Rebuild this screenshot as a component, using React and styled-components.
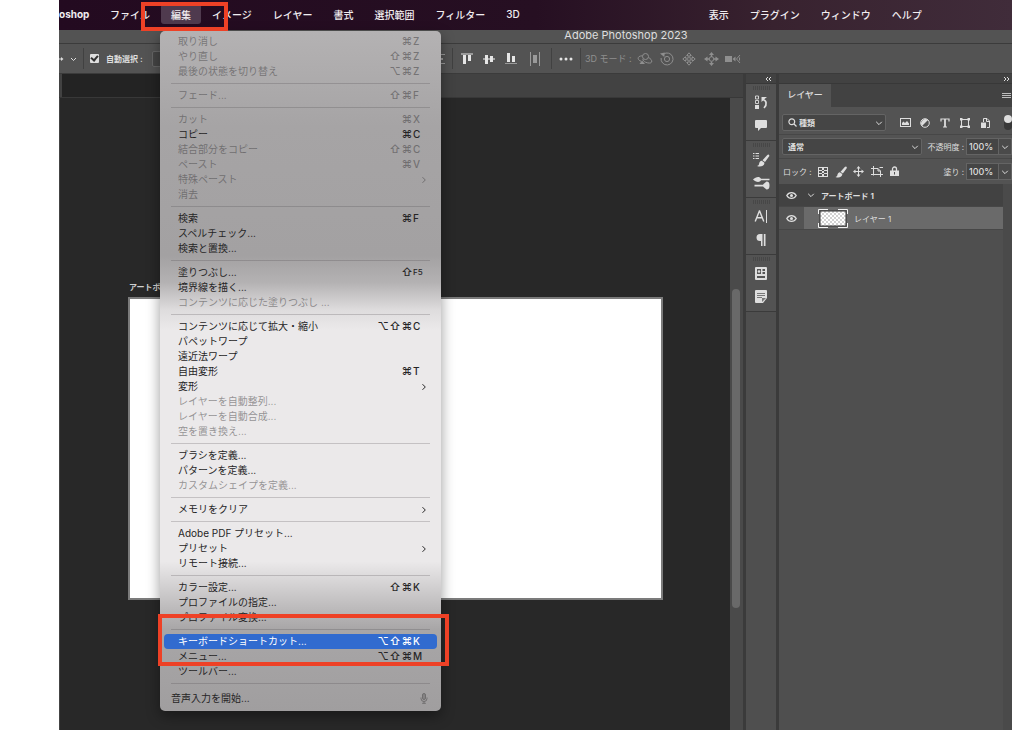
import { useState } from "react";
import styled, { createGlobalStyle } from "styled-components";

const GlobalStyle = createGlobalStyle`
  * {
    box-sizing: border-box;
  }

  body {
    margin: 0;
    background-color: #ffffff;
    font-family: Inter, "Noto Sans CJK JP", sans-serif;
    font-size: 10px;
  }

  button,
  input,
  select {
    font-family: inherit;
    color: inherit;
    margin: 0;
  }

  svg {
    display: block;
    flex-shrink: 0;
  }
`;

const Page = styled.div`
  position: relative;
  height: 100vh;
  min-height: 720px;
  padding: 0 12px 0 59px;
`;

const AppWindow = styled.div`
  height: 100%;
  display: flex;
  flex-direction: column;
  background-color: #535353;
  color: #dedede;
`;

const MenuBar = styled.nav`
  position: relative;
  z-index: 2;
  height: 30px;
  display: flex;
  align-items: center;
  gap: 1px;
  padding-bottom: 2px;
  background: linear-gradient(90deg, #230a20 0%, #260f22 50%, #38222f 75%, #402c3a 100%);
  color: #f1edf0;
`;

const AppName = styled.strong`
  width: 40px;
  font-size: 10px;
  font-weight: 700;
`;

const MenuSlot = styled.div`
  position: relative;
`;

const MenuButton = styled.button`
  height: 20px;
  padding: 0 10px;
  border: 0;
  border-radius: 3px;
  background-color: ${(props) => (props.$open ? "#4f3a4e" : "transparent")};
  font-size: 10px;
  font-weight: 500;
  white-space: nowrap;
`;

const Notch = styled.div`
  width: 167px;
`;

const DropDown = styled.div`
  position: absolute;
  top: 27px;
  left: -1px;
  width: 281px;
  padding: 3px 4px;
  border-radius: 5px;
  background: linear-gradient(
    180deg,
    #b4b2b3 0%,
    #a6a4a5 14%,
    #a3a1a2 33%,
    #b4b2b3 37%,
    #dedcdd 41%,
    #ebe9ea 44%,
    #ebe9ea 78%,
    #c9c7c8 83%,
    #a8a6a7 88%,
    #a09e9f 100%
  );
  box-shadow: 0 5px 14px rgba(0, 0, 0, 0.4);
`;

const DropDownItem = styled.button`
  width: 100%;
  height: ${(props) => (props.$voice ? "20px" : "15px")};
  display: flex;
  align-items: center;
  padding: ${(props) => (props.$voice ? "0 9px 0 7px" : "0 10px 0 14px")};
  border: 0;
  border-radius: 4px;
  background-color: ${(props) => (props.$selected ? "#316bcf" : "transparent")};
  color: ${(props) => (props.$selected ? "#ffffff" : "#262526")};
  font-size: 10px;
  line-height: 15px;
  text-align: left;
  white-space: nowrap;

  &:disabled {
    color: rgba(60, 58, 60, 0.5);
  }
`;

const ItemLabel = styled.span`
  flex: 1;
`;

const Modifier = styled.span`
  width: 12px;
  text-align: center;
  font-size: 11px;
  font-weight: 500;
`;

const Key = styled.span`
  width: 14px;
  font-size: ${(props) => (props.$small ? "8px" : "10px")};
  font-weight: 500;
`;

const Separator = styled.hr`
  height: 1px;
  margin: 4px 7px;
  border: 0;
  background-color: rgba(70, 68, 70, 0.24);
`;

const Marker = styled.div`
  position: absolute;
  z-index: 3;
  top: ${(props) => props.$top}px;
  left: ${(props) => props.$left}px;
  width: ${(props) => props.$width}px;
  height: ${(props) => props.$height}px;
  border: 4px solid #ee4126;
  pointer-events: none;
`;

const TitleBar = styled.header`
  height: 14px;
  padding-left: 181px;
  border-bottom: 1px solid #3b3b3b;
  font-size: 11px;
  line-height: 11px;
  text-align: center;
`;

const OptionsBar = styled.div`
  height: 30px;
  display: flex;
  align-items: center;
  border-bottom: 1px solid #3b3b3b;
  font-size: 8px;
`;

const ToolPreset = styled.button`
  width: 24px;
  height: 20px;
  padding: 0;
  display: flex;
  align-items: center;
  border: 0;
  background-color: transparent;
`;

const BarDivider = styled.span`
  width: 1px;
  height: 21px;
  background-color: #414141;
`;

const AutoSelect = styled.label`
  display: flex;
  align-items: center;
  gap: 7px;
  width: 62px;
  margin-left: 6px;
  font-weight: 700;
  white-space: nowrap;
`;

const CheckBox = styled.input`
  appearance: none;
  flex-shrink: 0;
  width: 9px;
  height: 9px;
  border-radius: 1px;
  background-color: #dedede;
  display: grid;
  place-items: center;

  &:checked::after {
    content: "";
    width: 3px;
    height: 5px;
    margin-bottom: 2px;
    border: solid #303030;
    border-width: 0 2px 2px 0;
    transform: rotate(40deg);
  }
`;

const TargetSelect = styled.select`
  appearance: none;
  width: 100px;
  height: 16px;
  padding: 0 6px;
  border: 1px solid #666666;
  border-radius: 2px;
  background-color: #454545;
  font-size: 8px;
`;

const ToolGroup = styled.div`
  display: flex;
  align-items: center;
  gap: ${(props) => props.$gap || 0}px;
  padding: 0 ${(props) => props.$pad || 0}px;
  margin-left: ${(props) => props.$push || 0}px;
  color: ${(props) => (props.$dim ? "#8f8f8f" : "#dedede")};
  white-space: nowrap;
`;

const ModeLabel = styled.span`
  width: 56px;
  padding-left: 4px;
  color: #8f8f8f;
  font-size: 9px;
  white-space: nowrap;
`;

const IconButton = styled.button`
  width: ${(props) => props.$width || 14}px;
  height: 16px;
  padding: 0;
  display: flex;
  align-items: center;
  justify-content: center;
  border: 0;
  background-color: transparent;
`;

const Workspace = styled.div`
  flex: 1;
  min-height: 0;
  display: flex;
  background-color: #3b3b3b;
`;

const Document = styled.main`
  flex: 1;
  min-width: 0;
  display: flex;
  flex-direction: column;
`;

const TabStrip = styled.div`
  height: 24px;
  padding-left: 3px;
  background-color: #424242;
  border-bottom: 1px solid #383838;
`;

const DocumentTab = styled.div`
  width: 220px;
  height: 23px;
  background-color: #232323;
`;

const CanvasRow = styled.div`
  flex: 1;
  display: flex;
`;

const Canvas = styled.div`
  flex: 1;
  padding: 183px 67px 0 68px;
  border-left: 1px solid #444444;
  background-color: #282828;
`;

const ArtboardName = styled.div`
  height: 16px;
  padding-left: 1px;
  color: #cfcfcf;
  font-size: 8px;
  font-weight: 700;
  line-height: 12px;
`;

const Artboard = styled.div`
  height: 303px;
  border: 2px solid #7b7b7b;
  background-color: #ffffff;
`;

const ScrollTrack = styled.div`
  width: 13px;
  padding: 191px 3px 0 2px;
  background-color: #4a4a4a;
`;

const ScrollThumb = styled.div`
  height: 319px;
  border-radius: 4px;
  background-color: #696969;
`;

const Dock = styled.aside`
  width: ${(props) => props.$width}px;
  margin-left: 3px;
  display: flex;
  flex-direction: column;
  background-color: #4f4f4f;
  overflow: hidden;
`;

const DockHeader = styled.div`
  height: 10px;
  flex-shrink: 0;
  display: flex;
  justify-content: flex-end;
  align-items: center;
  padding-right: ${(props) => (props.$narrow ? 4 : 2)}px;
  background-color: #424242;
  border-bottom: 1px solid #383838;
`;

const DockGroup = styled.div`
  height: 57px;
  display: flex;
  flex-direction: column;
  align-items: center;
  padding-top: 2px;
  background-color: #535353;
  border-bottom: 1px solid #3b3b3b;
`;

const Grip = styled.span`
  width: 17px;
  height: 4px;
  margin-bottom: 1px;
  background: repeating-linear-gradient(90deg, #474747 0 1px, #535353 1px 2px);
`;

const DockButton = styled.button`
  width: 24px;
  height: 23px;
  padding: 0;
  display: flex;
  align-items: center;
  justify-content: center;
  border: 0;
  background-color: transparent;
`;

const PanelTabs = styled.div`
  height: 23px;
  display: flex;
  justify-content: space-between;
  align-items: center;
  padding-right: 1px;
  background-color: #424242;
`;

const PanelTab = styled.button`
  height: 23px;
  width: 52px;
  padding: 0 0 2px;
  border: 0;
  background-color: #535353;
  font-size: 9px;
  font-weight: 500;
`;

const PanelRow = styled.div`
  height: ${(props) => props.$height}px;
  display: flex;
  align-items: center;
  padding-top: ${(props) => props.$top || 0}px;
  padding-left: 3px;
  background-color: #535353;
  border-bottom: ${(props) => (props.$line ? "1px solid #474747" : "0")};
  font-size: 8px;
  white-space: nowrap;
`;

const SelectBox = styled.label`
  width: ${(props) => props.$width}px;
  height: 17px;
  display: flex;
  align-items: center;
  gap: 2px;
  padding: 0 2px 0 5px;
  border: 1px solid #646464;
  border-radius: 2px;
  background-color: #454545;
`;

const PlainSelect = styled.select`
  appearance: none;
  flex: 1;
  min-width: 0;
  padding: 0;
  border: 0;
  background-color: transparent;
  font-size: 8px;
  font-weight: 700;
`;

const FilterIcons = styled.div`
  display: flex;
  gap: 6px;
  margin-left: 12px;
`;

const Toggle = styled.button`
  width: 8px;
  height: 15px;
  flex-shrink: 0;
  margin-left: 12px;
  padding: 0;
  border: 0;
  border-radius: 4px;
  background-color: #383838;

  &::before {
    content: "";
    display: block;
    width: 8px;
    height: 8px;
    margin-bottom: 7px;
    border-radius: 4px;
    background-color: #dedede;
  }
`;

const ValueLabel = styled.label`
  display: flex;
  align-items: center;
  justify-content: flex-end;
  margin-left: auto;
`;

const ValueInput = styled.input`
  width: 33px;
  height: 17px;
  padding: 0 2px;
  margin-left: 2px;
  border: 1px solid #646464;
  background-color: #454545;
  font-size: 9px;
  font-weight: 500;
`;

const ValueButton = styled.button`
  width: 13px;
  height: 17px;
  padding: 0;
  display: grid;
  place-items: center;
  border: 1px solid #646464;
  border-left: 0;
  background-color: #4a4a4a;
`;

const LayerArea = styled.div`
  flex: 1;
  display: flex;
  background-color: #4a4a4a;
`;

const LayerList = styled.ul`
  flex: 1;
  margin: 0 9px 0 0;
  padding: 0;
  list-style: none;
  background-color: #4f4f4f;
`;

const LayerItem = styled.li`
  height: 23px;
  display: flex;
  background-color: ${(props) => (props.$selected ? "#6a6a6a" : "#424242")};
  border-bottom: 1px solid #474747;
  font-size: 8px;
  font-weight: ${(props) => (props.$selected ? 400 : 700)};
`;

const EyeButton = styled.button`
  width: 25px;
  padding: 0;
  display: grid;
  place-items: center;
  border: 0;
  background-color: ${(props) => (props.$selected ? "#535353" : "transparent")};
`;

const LayerName = styled.div`
  display: flex;
  align-items: center;
  gap: 6px;
  padding-left: ${(props) => (props.$child ? 14 : 3)}px;
`;

const Chevron = ({ size = 8, right }) => (
  <svg width={size} height={size} viewBox="0 0 8 8" fill="none" stroke="currentColor">
    <path d={right ? "M3.5 1.2 6.3 4 3.5 6.8" : "M1.2 2.8 4 5.6 6.8 2.8"} />
  </svg>
);

const DoubleArrow = ({ right }) => (
  <svg width="7" height="6" viewBox="0 0 7 6" fill="none" stroke="currentColor">
    <path d={right ? "M1 1l2 2-2 2M4 1l2 2-2 2" : "M3 1 1 3l2 2M6 1 4 3l2 2"} />
  </svg>
);

const MicIcon = () => (
  <svg width="8" height="11" viewBox="0 0 8 11" fill="none" stroke="#6f6d6e">
    <rect x="2.5" y="0.5" width="3" height="6" rx="1.5" fill="#858384" />
    <path d="M1 4.5v1a3 3 0 0 0 6 0v-1M4 8.5V10M2.2 10.3h3.6" />
  </svg>
);

const DistributeRows = () => (
  <svg width="12" height="12" viewBox="0 0 12 12" fill="#9a9a9a">
    <path d="M0 1h12v1H0zM2 5h8v2H2zM0 10h12v1H0z" />
  </svg>
);

const AlignTop = () => (
  <svg width="12" height="12" viewBox="0 0 12 12">
    <path d="M0 0h12v2H0z" fill="#9a9a9a" />
    <path d="M2 2h3v9H2zM7 2h3v6H7z" fill="#e6e6e6" />
  </svg>
);

const AlignMiddle = () => (
  <svg width="12" height="12" viewBox="0 0 12 12">
    <path d="M0 5h12v2H0z" fill="#a5a5a5" />
    <path d="M2 2h3v9H2zM7 3h3v6H7z" fill="#e6e6e6" />
  </svg>
);

const AlignBottom = () => (
  <svg width="12" height="12" viewBox="0 0 12 12">
    <path d="M0 10h12v1H0z" fill="#9a9a9a" />
    <path d="M2 0h3v9H2zM7 3h3v6H7z" fill="#e6e6e6" />
  </svg>
);

const DistributeColumns = () => (
  <svg width="10" height="14" viewBox="0 0 10 14" fill="#9a9a9a">
    <path d="M0 0h1v14H0zM9 0h1v14H9zM3 3h4v8H3z" />
  </svg>
);

const Dots = () => (
  <svg width="14" height="4" viewBox="0 0 14 4" fill="#e6e6e6">
    <circle cx="2" cy="2" r="1.5" />
    <circle cx="7" cy="2" r="1.5" />
    <circle cx="12" cy="2" r="1.5" />
  </svg>
);

const OrbitIcon = () => (
  <svg width="16" height="14" viewBox="0 0 16 14" fill="none" stroke="currentColor">
    <circle cx="8.5" cy="4.5" r="3" />
    <path d="M5.5 3.8C2.5 3.8.8 5 1.2 6.8c.3 1 1.3 1.900 2.800 2.400M11.500 5.500c2 1 3.700 2.800 3.200 4.500-.6 1.500-3.500 1.300-6 .3C7 9.500 6 8.500 5.800 7" />
    <path d="M2.500 12 8 12 5 8.500z" fill="currentColor" stroke="none" />
  </svg>
);

const RollIcon = () => (
  <svg width="14" height="14" viewBox="0 0 14 14" fill="none" stroke="currentColor">
    <path d="M3.500 2.100A6 6 0 1 1 1.100 6" />
    <circle cx="7" cy="7" r="2.600" />
    <path d="M0 1.500 4.800.5 4.300 5z" fill="currentColor" stroke="none" />
  </svg>
);

const PanIcon = () => (
  <svg width="14" height="14" viewBox="0 0 14 14" fill="none" stroke="currentColor">
    <path d="M7 .8 9.300 3.500H7.800v2.700h2.700V4.700L13.200 7l-2.700 2.300V7.800H7.800v2.700h1.500L7 13.200 4.700 10.500h1.500V7.800H3.500v1.500L.8 7l2.700-2.300v1.500h2.700V3.500H4.700z" />
  </svg>
);

const SlideIcon = () => (
  <svg width="15" height="14" viewBox="0 0 15 14" fill="currentColor">
    <path d="M7.500 0 10 3H8.200v2H6.800V3H5zM0 7l3.500-2.500v1.800H5v1.400H3.500v1.800zM15 7l-3.500-2.500v1.800H10v1.400h1.500v1.800zM7.500 14 5 11h1.800V9.500h1.400V11H10z" />
    <circle cx="7.500" cy="7" r="2.300" fill="none" stroke="currentColor" />
  </svg>
);

const CameraIcon = () => (
  <svg width="16" height="10" viewBox="0 0 16 10" fill="currentColor">
    <path d="M0 2h7v6H0zM7.500 5l3-2.500v5z" />
    <path d="M15 1 11.500 5 15 9M14.500 3.500v3" fill="none" stroke="currentColor" />
  </svg>
);

const HistoryIcon = () => (
  <svg width="14" height="15" viewBox="0 0 14 15" fill="none" stroke="currentColor">
    <path d="M1.500 1h3v3h-3zM1.500 5.500h3v3h-3z" strokeWidth="0.900" />
    <path d="M1 10h4v4H1z" fill="currentColor" stroke="none" />
    <path d="M8.500 4.500c4 .5 5 5 1.500 8.500" strokeWidth="1.700" />
    <path d="M7.500 7V2h5.500L10.500 4z" fill="currentColor" stroke="none" />
  </svg>
);

const CommentIcon = () => (
  <svg width="14" height="13" viewBox="0 0 14 13" fill="currentColor">
    <path d="M2 1h10q1 0 1 1v6q0 1-1 1H7l-3 3V9H2Q1 9 1 8V2q0-1 1-1z" />
  </svg>
);

const BrushPath = () => (
  <>
    <path d="M12.300.2c.7.500.7 1.200.2 1.900L8.500 7.600 6 5.700l4.600-5c.5-.6 1.200-.8 1.700-.5z" />
    <path d="M5.300 6.200 7.900 8.300c.2 2.900-3.400 4.700-7.400 3.200 1.900-.4 2-1.500 2.200-2.700.3-1.500 1.300-2.500 2.600-2.600z" />
  </>
);

const BrushesIcon = () => (
  <svg width="18" height="15" viewBox="0 0 18 15" fill="currentColor">
    <path d="M1 1h1.500v1H1zM3.500 1H7v1H3.500zM1 3.500h1.500v1H1zM3.500 3.500H7v1H3.500zM1 6h1.500v1H1zM3.500 6H7v1H3.500z" />
    <g transform="translate(4.500 2.500)">
      <BrushPath />
    </g>
  </svg>
);

const BrushSettingsIcon = () => (
  <svg width="17" height="14" viewBox="0 0 17 14" fill="currentColor">
    <path d="M0 3.500C2.500 1 6.500 0 8 2.700h8.500v1.600H8C6.500 7 2.500 6 0 3.500zM1.500 8.800h8.700v1.600H1.500zM10.200 8.300l3.300-2.800c2.300 0 3 1.200 3 4s-.7 4-3 4l-3.300-2.700z" />
  </svg>
);

const CharacterIcon = () => (
  <svg width="14" height="15" viewBox="0 0 14 15" fill="none" stroke="currentColor" strokeWidth="1.400">
    <path d="M1.200 12.500 5.400 2h.2l4.200 10.500M2.700 8.800h5.600" />
    <path d="M12.500 1v13" strokeWidth="1" />
  </svg>
);

const ParagraphIcon = () => (
  <svg width="12" height="14" viewBox="0 0 12 14" fill="currentColor">
    <path d="M10.500 1H5a3.500 3.500 0 0 0 0 7h1.500V1z" />
    <path d="M6 1h1.500v12H6zM8.800 1h1.700v12H8.800z" />
  </svg>
);

const LibraryIcon = () => (
  <svg width="12" height="13" viewBox="0 0 12 13">
    <rect width="12" height="13" rx="1" fill="#dedede" />
    <path d="M2 2h4v5H2zM7.500 2H10v2H7.500zM7.500 5H10v2H7.500zM2 9h8v2H2z" fill="#555555" />
    <circle cx="4" cy="4.500" r="1.300" fill="#dedede" />
  </svg>
);

const NotesIcon = () => (
  <svg width="12" height="13" viewBox="0 0 12 13">
    <path d="M1 0h10q1 0 1 1v7l-4 5H1q-1 0-1-1V1q0-1 1-1z" fill="#dedede" />
    <path d="M2 3h8v1H2zM2 5h8v1H2zM2 7h5v1H2zM7 12V8h4z" fill="#777777" />
  </svg>
);

const SearchIcon = () => (
  <svg width="9" height="9" viewBox="0 0 9 9" fill="none" stroke="currentColor" strokeWidth="1.200">
    <circle cx="3.800" cy="3.800" r="2.900" />
    <path d="m6 6 2.500 2.500" />
  </svg>
);

const PixelFilter = () => (
  <svg width="11" height="10" viewBox="0 0 11 10">
    <rect x="0.500" y="0.500" width="10" height="8" fill="none" stroke="currentColor" />
    <path d="M2 7V5l1.500-1.500L5 5l2-2 2 2.500V7z" fill="currentColor" />
  </svg>
);

const AdjustFilter = () => (
  <svg width="10" height="10" viewBox="0 0 10 10">
    <circle cx="5" cy="5" r="4.300" fill="none" stroke="currentColor" />
    <path d="M8 2A4.300 4.300 0 0 0 2 8z" fill="currentColor" />
  </svg>
);

const TypeFilter = () => (
  <svg width="10" height="10" viewBox="0 0 10 10" fill="none" stroke="currentColor">
    <path d="M1 3.500V1h8v2.500M3 9h4" strokeWidth="1.200" />
    <path d="M5 1v8" strokeWidth="1.800" />
  </svg>
);

const ShapeFilter = () => (
  <svg width="10" height="10" viewBox="0 0 10 10" fill="none" stroke="currentColor">
    <path d="M2 1.500h6M2 8.500h6M1.500 2v6M8.500 2v6" />
    <path d="M0 0h2.500v2.500H0zM7.500 0H10v2.500H7.500zM0 7.500h2.500V10H0zM7.500 7.500H10V10H7.500z" fill="currentColor" stroke="none" />
  </svg>
);

const SmartFilter = () => (
  <svg width="9" height="10" viewBox="0 0 9 10">
    <path d="M2.500 4V.5h3.500l2.500 2.500v6.500H6" fill="none" stroke="currentColor" />
    <path d="M0 4.500h5V10H0z" fill="currentColor" />
    <path d="M5.500 1v2.500H8" fill="none" stroke="currentColor" />
  </svg>
);

const LockPixels = () => (
  <svg width="10" height="10" viewBox="0 0 10 10">
    <rect x="0.500" y="0.500" width="9" height="9" fill="none" stroke="currentColor" />
    <path d="M4 1h2v2H4zM1 3h3v1H1zM6 3h3v1H6zM4 4h2v2H4zM1 6h3v1H1zM6 6h3v1H6zM4 7h2v2H4z" fill="currentColor" />
  </svg>
);

const LockBrush = () => (
  <svg width="12" height="12" viewBox="0 0 13 12" fill="currentColor">
    <BrushPath />
  </svg>
);

const LockMove = () => (
  <svg width="11" height="11" viewBox="0 0 11 11" fill="currentColor">
    <path d="M5.500 0 7.500 2.500H6V5h2.500V3.500L11 5.500l-2.500 2V6H6v2.500h1.500L5.500 11l-2-2.500H5V6H2.500v1.500L0 5.500l2.500-2V5H5V2.500H3.500z" />
  </svg>
);

const LockArtboard = () => (
  <svg width="12" height="11" viewBox="0 0 12 11" fill="none" stroke="currentColor">
    <path d="M2.500 0v9.500M0 2.500h7L9.500 5V11M0 8.500h12M7 2.500V5h2.500M8.500 1.500H12" />
  </svg>
);

const LockAll = () => (
  <svg width="9" height="11" viewBox="0 0 9 11">
    <path d="M2.500 5V3a2 2 0 0 1 4 0v2" fill="none" stroke="currentColor" strokeWidth="1.300" />
    <path d="M0 4.500h9V10H0z" fill="currentColor" />
    <path d="M4 6h1v2.500H4z" fill="#535353" />
  </svg>
);

const EyeIcon = () => (
  <svg width="11" height="9" viewBox="0 0 11 9" fill="none" stroke="currentColor" strokeWidth="1.300">
    <path d="M.8 4.500C3 .6 8 .6 10.200 4.500 8 8.400 3 8.400.8 4.500z" />
    <circle cx="5.500" cy="4.500" r="1.500" fill="currentColor" stroke="none" />
  </svg>
);

const LayerThumb = () => (
  <svg width="30" height="19" viewBox="0 0 30 19">
    <defs>
      <pattern id="checker" width="4" height="4" patternUnits="userSpaceOnUse">
        <rect width="4" height="4" fill="#ffffff" />
        <path d="M0 0h2v2H0zM2 2h2v2H2z" fill="#d2d2d2" />
      </pattern>
    </defs>
    <rect x="2" y="2" width="26" height="15" fill="url(#checker)" stroke="#333333" />
    <path d="M.5 5V.5H10M20 .5h9.500V5M29.500 14v4.500H20M10 18.500H.5V14" fill="none" stroke="#f2f2f2" />
  </svg>
);

const leftMenus = ["ファイル", "編集", "イメージ", "レイヤー", "書式", "選択範囲", "フィルター", "3D"];
const rightMenus = ["表示", "プラグイン", "ウィンドウ", "ヘルプ"];

const editMenu = [
  [
    { label: "取り消し", mods: "⌘", keyName: "Z", off: true },
    { label: "やり直し", mods: "⇧⌘", keyName: "Z", off: true },
    { label: "最後の状態を切り替え", mods: "⌥⌘", keyName: "Z", off: true },
  ],
  [{ label: "フェード...", mods: "⇧⌘", keyName: "F", off: true }],
  [
    { label: "カット", mods: "⌘", keyName: "X", off: true },
    { label: "コピー", mods: "⌘", keyName: "C" },
    { label: "結合部分をコピー", mods: "⇧⌘", keyName: "C", off: true },
    { label: "ペースト", mods: "⌘", keyName: "V", off: true },
    { label: "特殊ペースト", sub: true, off: true },
    { label: "消去", off: true },
  ],
  [
    { label: "検索", mods: "⌘", keyName: "F" },
    { label: "スペルチェック..." },
    { label: "検索と置換..." },
  ],
  [
    { label: "塗りつぶし...", mods: "⇧", keyName: "F5" },
    { label: "境界線を描く..." },
    { label: "コンテンツに応じた塗りつぶし ...", off: true },
  ],
  [
    { label: "コンテンツに応じて拡大・縮小", mods: "⌥⇧⌘", keyName: "C" },
    { label: "パペットワープ" },
    { label: "遠近法ワープ" },
    { label: "自由変形", mods: "⌘", keyName: "T" },
    { label: "変形", sub: true },
    { label: "レイヤーを自動整列...", off: true },
    { label: "レイヤーを自動合成...", off: true },
    { label: "空を置き換え...", off: true },
  ],
  [
    { label: "ブラシを定義..." },
    { label: "パターンを定義..." },
    { label: "カスタムシェイプを定義...", off: true },
  ],
  [{ label: "メモリをクリア", sub: true }],
  [
    { label: "Adobe PDF プリセット..." },
    { label: "プリセット", sub: true },
    { label: "リモート接続..." },
  ],
  [
    { label: "カラー設定...", mods: "⇧⌘", keyName: "K" },
    { label: "プロファイルの指定..." },
    { label: "プロファイル変換..." },
  ],
  [
    { label: "キーボードショートカット...", mods: "⌥⇧⌘", keyName: "K" },
    { label: "メニュー...", mods: "⌥⇧⌘", keyName: "M" },
    { label: "ツールバー..." },
  ],
];

const EditMenu = () => {
  const [selected, setSelected] = useState("キーボードショートカット...");

  return (
    <DropDown role="menu">
      {editMenu.map((group) => (
        <div key={group[0].label}>
          {group.map((item) => (
            <DropDownItem
              key={item.label}
              role="menuitem"
              disabled={item.off}
              $selected={item.label === selected}
              onClick={() => setSelected(item.label)}
            >
              <ItemLabel>{item.label}</ItemLabel>
              {item.mods && [...item.mods].map((mod) => <Modifier key={mod}>{mod}</Modifier>)}
              {item.keyName && <Key $small={item.keyName.length > 1}>{item.keyName}</Key>}
              {item.sub && <Chevron right />}
            </DropDownItem>
          ))}
          <Separator />
        </div>
      ))}
      <DropDownItem role="menuitem" $voice>
        <ItemLabel>音声入力を開始...</ItemLabel>
        <MicIcon />
      </DropDownItem>
    </DropDown>
  );
};

const dockGroups = [
  [
    { name: "ヒストリー", icon: <HistoryIcon /> },
    { name: "コメント", icon: <CommentIcon /> },
  ],
  [
    { name: "ブラシ", icon: <BrushesIcon /> },
    { name: "ブラシ設定", icon: <BrushSettingsIcon /> },
  ],
  [
    { name: "文字", icon: <CharacterIcon /> },
    { name: "段落", icon: <ParagraphIcon /> },
  ],
  [
    { name: "ライブラリ", icon: <LibraryIcon /> },
    { name: "注釈", icon: <NotesIcon /> },
  ],
];

const Value = ({ label }) => (
  <>
    <ValueLabel>
      {label}
      <ValueInput defaultValue="100%" />
    </ValueLabel>
    <ValueButton aria-label={label}>
      <Chevron />
    </ValueButton>
  </>
);

const LayersPanel = () => (
  <Dock $width={233}>
    <DockHeader>
      <DoubleArrow right />
    </DockHeader>
    <PanelTabs>
      <PanelTab>レイヤー</PanelTab>
      <IconButton $width={10} aria-label="パネルメニュー">
        <svg width="9" height="8" viewBox="0 0 9 8" stroke="currentColor">
          <path d="M0 1.500h9M0 3.500h9M0 5.500h9" opacity="0.800" />
        </svg>
      </IconButton>
    </PanelTabs>
    <PanelRow $height={28} $top={4} $line>
      <SelectBox $width={105}>
        <SearchIcon />
        <PlainSelect aria-label="フィルターの種類">
          <option>種類</option>
        </PlainSelect>
        <Chevron />
      </SelectBox>
      <FilterIcons>
        <IconButton aria-label="ピクセルレイヤー"><PixelFilter /></IconButton>
        <IconButton aria-label="調整レイヤー"><AdjustFilter /></IconButton>
        <IconButton aria-label="テキストレイヤー"><TypeFilter /></IconButton>
        <IconButton aria-label="シェイプレイヤー"><ShapeFilter /></IconButton>
        <IconButton aria-label="スマートオブジェクト"><SmartFilter /></IconButton>
      </FilterIcons>
      <Toggle aria-label="フィルターの切り替え" />
    </PanelRow>
    <PanelRow $height={24} $line>
      <SelectBox $width={140}>
        <PlainSelect aria-label="描画モード">
          <option>通常</option>
        </PlainSelect>
        <Chevron />
      </SelectBox>
      <Value label="不透明度 :" />
    </PanelRow>
    <PanelRow $height={25}>
      <ToolGroup $gap={4} $pad={1}>
        ロック :
        <ToolGroup $gap={4}>
          <IconButton aria-label="透明ピクセルをロック"><LockPixels /></IconButton>
          <IconButton aria-label="画像ピクセルをロック"><LockBrush /></IconButton>
          <IconButton aria-label="位置をロック"><LockMove /></IconButton>
          <IconButton aria-label="自動ネストをロック"><LockArtboard /></IconButton>
          <IconButton aria-label="すべてをロック"><LockAll /></IconButton>
        </ToolGroup>
      </ToolGroup>
      <Value label="塗り :" />
    </PanelRow>
    <LayerArea>
      <LayerList>
        <LayerItem>
          <EyeButton aria-label="アートボード 1 の表示"><EyeIcon /></EyeButton>
          <LayerName>
            <Chevron />
            アートボード 1
          </LayerName>
        </LayerItem>
        <LayerItem $selected>
          <EyeButton $selected aria-label="レイヤー 1 の表示"><EyeIcon /></EyeButton>
          <LayerName $child>
            <LayerThumb />
            レイヤー 1
          </LayerName>
        </LayerItem>
      </LayerList>
    </LayerArea>
  </Dock>
);

const App = () => {
  return (
    <Page>
      <GlobalStyle />
      <AppWindow>
        <MenuBar>
          <AppName>oshop</AppName>
          {leftMenus.map((name) => (
            <MenuSlot key={name}>
              <MenuButton $open={name === "編集"}>{name}</MenuButton>
              {name === "編集" && <EditMenu />}
            </MenuSlot>
          ))}
          <Notch />
          {rightMenus.map((name) => (
            <MenuButton key={name}>{name}</MenuButton>
          ))}
        </MenuBar>
        <TitleBar>Adobe Photoshop 2023</TitleBar>
        <OptionsBar>
          <ToolPreset aria-label="移動ツール">
            <svg width="20" height="8" viewBox="0 0 20 8" fill="none" stroke="currentColor">
              <path d="M0 4h3M12 3l2.500 2.500L17 3" />
              <path d="M2 2v4l2.500-2z" fill="currentColor" stroke="none" />
            </svg>
          </ToolPreset>
          <BarDivider />
          <AutoSelect>
            <CheckBox type="checkbox" defaultChecked />
            自動選択 :
          </AutoSelect>
          <TargetSelect aria-label="自動選択の対象">
            <option>レイヤー</option>
          </TargetSelect>
          <ToolGroup $push={174} $pad={7}>
            <IconButton $width={12} aria-label="水平方向に分布"><DistributeRows /></IconButton>
          </ToolGroup>
          <BarDivider />
          <ToolGroup $gap={8} $pad={7}>
            <IconButton aria-label="上端揃え"><AlignTop /></IconButton>
            <IconButton aria-label="垂直方向中央揃え"><AlignMiddle /></IconButton>
            <IconButton aria-label="下端揃え"><AlignBottom /></IconButton>
            <IconButton $width={18} aria-label="垂直方向に分布"><DistributeColumns /></IconButton>
          </ToolGroup>
          <BarDivider />
          <ToolGroup $pad={7}>
            <IconButton aria-label="整列と分布"><Dots /></IconButton>
          </ToolGroup>
          <BarDivider />
          <ModeLabel>3D モード :</ModeLabel>
          <ToolGroup $dim $gap={6}>
            <IconButton $width={16} aria-label="3D 回転"><OrbitIcon /></IconButton>
            <IconButton $width={16} aria-label="3D ロール"><RollIcon /></IconButton>
            <IconButton $width={16} aria-label="3D パン"><PanIcon /></IconButton>
            <IconButton $width={16} aria-label="3D スライド"><SlideIcon /></IconButton>
            <IconButton $width={16} aria-label="3D ズーム"><CameraIcon /></IconButton>
          </ToolGroup>
        </OptionsBar>
        <Workspace>
          <Document>
            <TabStrip>
              <DocumentTab />
            </TabStrip>
            <CanvasRow>
              <Canvas>
                <ArtboardName>アートボード 1</ArtboardName>
                <Artboard />
              </Canvas>
              <ScrollTrack>
                <ScrollThumb />
              </ScrollTrack>
            </CanvasRow>
          </Document>
          <Dock $width={30}>
            <DockHeader $narrow>
              <DoubleArrow />
            </DockHeader>
            {dockGroups.map((group) => (
              <DockGroup key={group[0].name}>
                <Grip />
                {group.map((item) => (
                  <DockButton key={item.name} aria-label={item.name}>
                    {item.icon}
                  </DockButton>
                ))}
              </DockGroup>
            ))}
          </Dock>
          <LayersPanel />
        </Workspace>
      </AppWindow>
      <Marker $top={2} $left={141} $width={87} $height={29} />
      <Marker $top={614} $left={158} $width={291} $height={52} />
    </Page>
  );
};

export default App;
